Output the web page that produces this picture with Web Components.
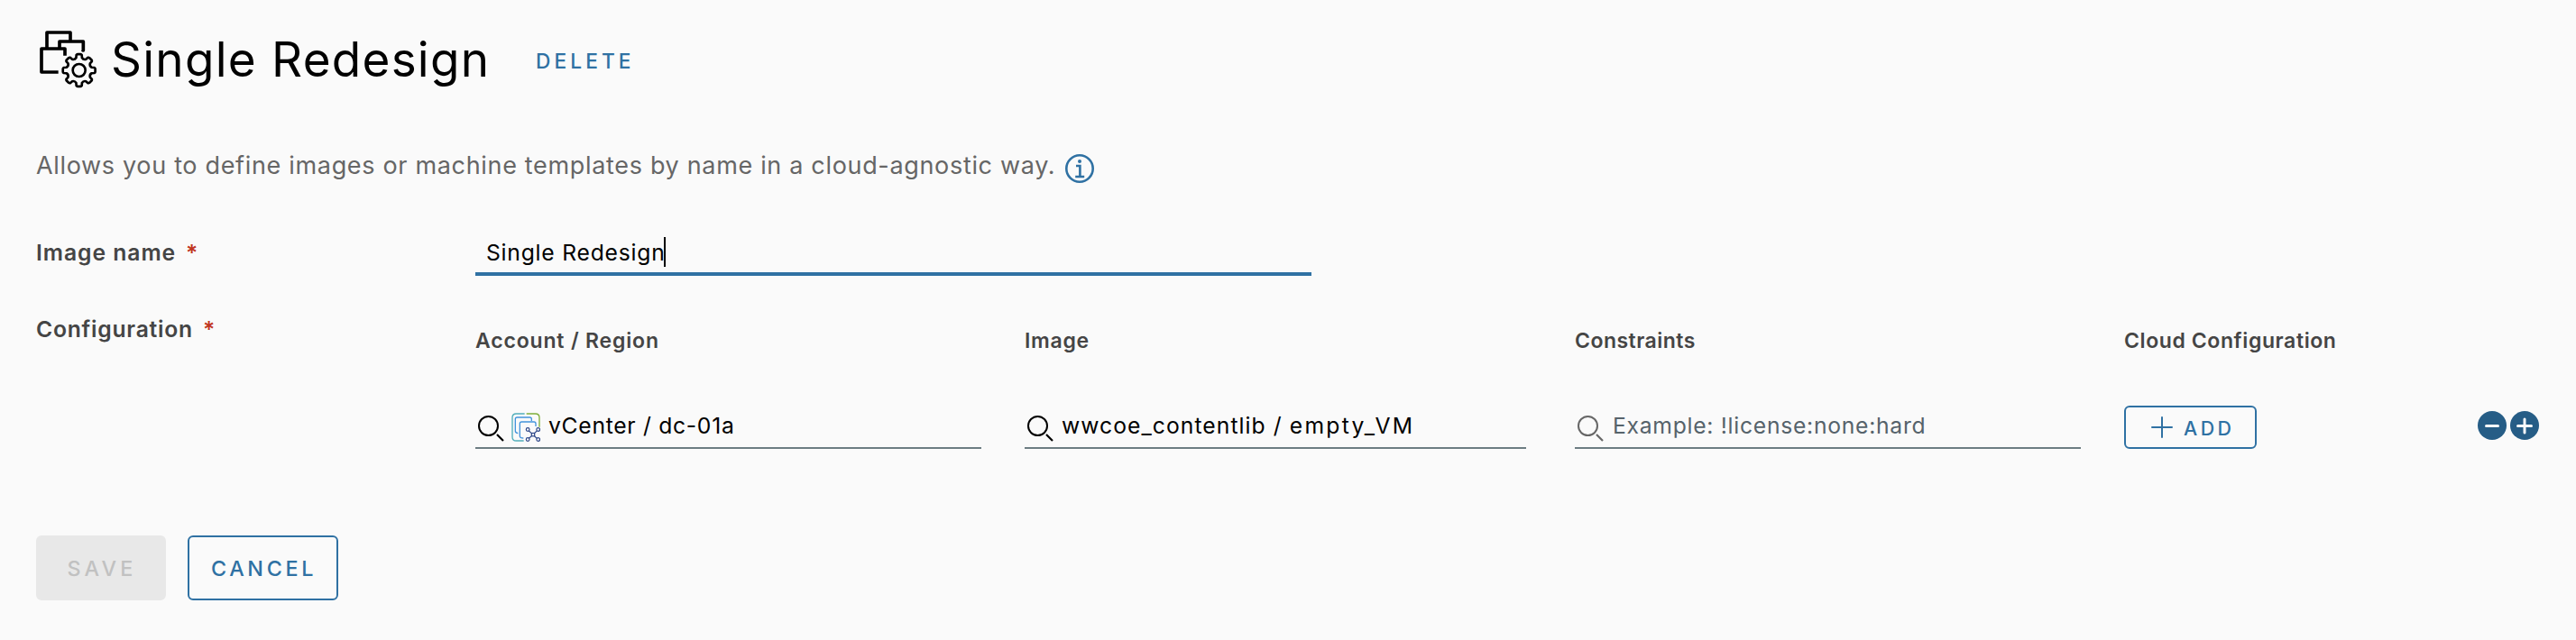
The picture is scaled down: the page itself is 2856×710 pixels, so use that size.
<!DOCTYPE html>
<html lang="en">
<head>
<meta charset="utf-8">
<title>Single Redesign</title>
<style>
body { margin: 0; background: #fafafa; font-family: Inter, "Liberation Sans", sans-serif; color: #000; }
</style>
</head>
<body>
<image-mapping-page></image-mapping-page>

<template id="t-page">
<style>
:host { display: flex; flex-direction: column; width: 2856px; height: 710px; box-sizing: border-box; padding: 26px 0 0 40px; background: #fafafa; overflow: hidden; }
header { display: flex; height: 80px; }
h1 { margin: 8px 0 0 7px; font-size: 53px; line-height: 64px; font-weight: 400; letter-spacing: 1.25px; width: 471px; white-space: nowrap; }
.del { margin-top: 28px; font-size: 22.7px; line-height: 28px; font-weight: 500; letter-spacing: 4.1px; color: #2f71a3; }
mapping-icon { margin-left: -4px; }
.desc { display: flex; height: 38px; margin-top: 59px; color: #666; font-size: 27px; line-height: 36px; letter-spacing: .671px; white-space: nowrap; }
.desc p { margin: 1px 0 0 0; width: 1141px; }
.desc info-icon { margin-top: 6px; }
.row { display: grid; grid-template-columns: 487px 1fr; }
.name { margin-top: 61px; height: 42px; }
.config { margin-top: 43px; height: 149px; }
.table { display: grid; grid-template-columns: 609px 610px 609px 1fr; grid-template-rows: 87px 48px; padding-top: 14px; }
.actions { display: flex; gap: 4px; padding: 6px 41px 0 0; }
.cell { display: flex; justify-content: space-between; }
.item { letter-spacing: 2.3px; }
footer { display: flex; gap: 24px; margin-top: 96px; }
</style>
<header>
  <mapping-icon></mapping-icon>
  <h1>Single Redesign</h1>
  <span class="del">DELETE</span>
</header>
<div class="desc"><p>Allows you to define images or machine templates by name in a cloud-agnostic way.</p><info-icon></info-icon></div>
<div class="row name">
  <field-label style="--ls:.95px;--gap:11px">Image name</field-label>
  <name-input>Single Redesign</name-input>
</div>
<div class="row config">
  <field-label style="--ls:.75px;--gap:11px">Configuration</field-label>
  <div class="table">
    <column-title style="--ls:.83px">Account / Region</column-title>
    <column-title style="--ls:.733px">Image</column-title>
    <column-title style="--ls:.48px">Constraints</column-title>
    <column-title style="--ls:.6px">Cloud Configuration</column-title>
    <search-field style="--w:561px;--ls:.7px"><vcenter-icon slot="icon"></vcenter-icon>vCenter / dc-01a</search-field>
    <search-field style="--w:556px;--ls:1.05px;--gap:9px">wwcoe_contentlib / <span class="item">empty_VM</span></search-field>
    <search-field style="--w:561px;--ls:.717px;--gap:10px;--icon:#666;--text:#56636b">Example: !license:none:hard</search-field>
    <div class="cell"><add-button>ADD</add-button>
      <div class="actions"><round-button></round-button><round-button plus></round-button></div>
    </div>
  </div>
</div>
<footer>
  <action-button disabled style="--w:144px;--ls:4.2px">SAVE</action-button>
  <action-button style="--w:167px;--ls:3.7px">CANCEL</action-button>
</footer>
</template>

<script>
const define = (name, html, setup) => customElements.define(name, class extends HTMLElement {
  connectedCallback() {
    if (this.shadowRoot) return;
    const root = this.attachShadow({ mode: 'open' });
    root.innerHTML = html;
    if (setup) setup(root, this);
  }
});

define('mapping-icon', `<style>:host{display:block;width:80px;height:80px}svg{display:block}</style>
<svg width="80" height="80" viewBox="0 0 240 240" fill="none" stroke="#000" stroke-width="11" stroke-linejoin="round">
<path d="M48 82V30h78v28M90 82V60h79v30l-4-3M108 107V84H30v78h56"/>
<path class="gear" stroke-width="8"/><circle cx="155" cy="156" r="21" stroke-width="8"/></svg>`, root => {
  const point = (r, deg) => {
    const a = deg * Math.PI / 180;
    return (155 + r * Math.cos(a)).toFixed(1) + ' ' + (156 + r * Math.sin(a)).toFixed(1);
  };
  let d = '';
  for (let i = 0; i < 8; i++) {
    const a = i * 45;
    d += (i ? 'L' : 'M') + point(43, a - 13) + 'L' + point(52, a - 10) + 'Q' + point(54, a - 8) + ' ' + point(54, a - 5)
      + 'L' + point(54, a + 5) + 'Q' + point(54, a + 8) + ' ' + point(52, a + 10) + 'L' + point(43, a + 13)
      + 'Q' + point(37, a + 22.5) + ' ' + point(43, a + 32);
  }
  root.querySelector('.gear').setAttribute('d', d + 'Z');
});

define('info-icon', `<style>:host{display:block;width:32px;height:32px}svg{display:block}</style>
<svg width="32" height="32" viewBox="0 0 32 32" fill="none" stroke="#2f71a3"><circle cx="16" cy="16" r="14.7" stroke-width="2.6"/>
<circle cx="16" cy="8" r="2" fill="#2f71a3" stroke="none"/><path d="M12 13h4.4v11.5M11.2 25h10" stroke-width="2.6"/></svg>`);

define('vcenter-icon', `<style>:host{display:block;width:32px;height:32px}svg{display:block}</style>
<svg width="32" height="32" viewBox="93 24 96 96" fill="none" stroke-width="4">
<path d="M137 27h-28q-13 0-13 13v64q0 13 13 13h25" stroke="#52aebb"/>
<path d="M143 27h30q13 0 13 13v31" stroke="#7fae3b"/>
<path d="M160 51v-6q0-6-6-6h-42q-6 0-6 6v40q0 6 9 7M174 69v-9q0-6-6-6h-41q-6 0-6 6v41q0 7 12 7" stroke="#4394dc"/>
<g stroke="#2c4688" stroke-width="3.6"><path d="M151 84l8 7M178 84l-8 7M151 109l8-7M178 109l-8-7"/><rect x="160" y="91.500" width="10" height="10"/>
<circle cx="147.500" cy="79.500" r="5.500"/><circle cx="182" cy="79.500" r="5.500"/><circle cx="147.500" cy="112.500" r="5.500"/><circle cx="182" cy="112.500" r="5.500"/></g></svg>`);

define('field-label', `<style>:host{display:flex;font-size:24.7px;line-height:32px;font-weight:600;color:#454545;letter-spacing:var(--ls)}
b{color:#c1361f;font-weight:600;margin-left:var(--gap);letter-spacing:0}</style><slot></slot><b>*</b>`);

define('name-input', `<style>:host{display:flex;box-sizing:border-box;width:927px;height:43px;margin-top:-1px;border-bottom:4px solid #2f71a3;padding-left:12px;font-size:24.7px;line-height:34px;letter-spacing:.77px}
i{width:2px;height:33px;background:#000;margin-left:-2px}</style><slot></slot><i></i>`);

define('column-title', `<style>:host{display:block;font-size:23px;line-height:30px;font-weight:600;color:#454545;letter-spacing:var(--ls)}</style><slot></slot>`);

define('search-field', `<style>:host{display:flex;box-sizing:border-box;width:var(--w);height:48px;border-bottom:2px solid #6d7d82;padding-left:3px;font-size:24.7px;line-height:34px;letter-spacing:var(--ls);color:var(--text,#000);white-space:nowrap}
svg{display:block;margin-top:11px;flex:none}span{margin:5px 0 0 var(--gap,9px)}::slotted(vcenter-icon){margin:8px 0 0 8px}</style>
<svg width="29" height="29" viewBox="0 0 29 29" fill="none" style="stroke:var(--icon,#000)" stroke-width="2"><circle cx="11.500" cy="11.500" r="10.500"/><path d="M21 21l7 7" stroke-width="2.200"/></svg>
<slot name="icon"></slot><span><slot></slot></span>`);

define('add-button', `<style>:host{display:flex;box-sizing:border-box;width:147px;height:48px;border:2px solid #2f71a3;border-radius:6px;color:#2f71a3;font-size:21.4px;line-height:26px;font-weight:500;letter-spacing:3.5px;padding-left:28px}
svg{display:block;margin-top:10px;margin-right:12px}span{margin-top:10px}</style>
<svg width="24" height="24" viewBox="0 0 24 24" stroke="#2f71a3" stroke-width="2" stroke-linecap="round"><path d="M1 12h22M12 1v22"/></svg><span><slot></slot></span>`);

define('round-button', `<style>:host{display:block;width:32px;height:32px}svg{display:block}</style>
<svg width="32" height="32" viewBox="0 0 32 32" stroke="#fafafa" stroke-width="3" stroke-linecap="round"><circle cx="16" cy="16" r="16" fill="#265d86" stroke="none"/><path/></svg>`,
  (root, host) => root.querySelector('path').setAttribute('d', host.hasAttribute('plus') ? 'M8.500 16.500h15M16 9v15' : 'M9.500 16.500h13'));

define('action-button', `<style>:host{display:flex;justify-content:center;box-sizing:border-box;width:var(--w);height:72px;border:2px solid #2f71a3;border-radius:6px;color:#2f71a3;font-size:23.3px;line-height:70px;font-weight:500;letter-spacing:var(--ls);text-indent:2px}
:host([disabled]){background:#e8e8e8;border-color:#e8e8e8;color:#c1c1c1}</style><slot></slot>`);

customElements.define('image-mapping-page', class extends HTMLElement {
  connectedCallback() {
    this.attachShadow({ mode: 'open' }).append(document.getElementById('t-page').content.cloneNode(true));
  }
});
</script>
</body>
</html>
